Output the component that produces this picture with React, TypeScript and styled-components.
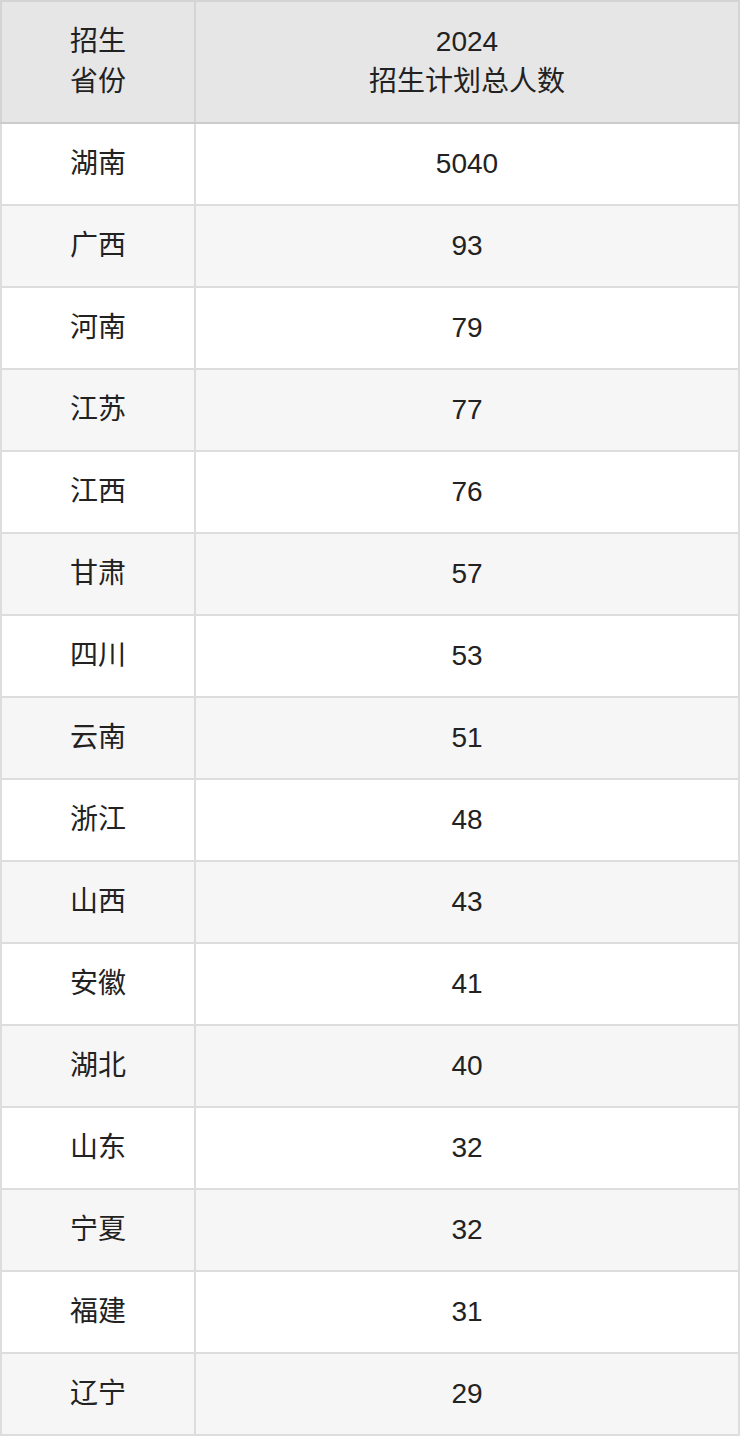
import React from "react";
import styled, { createGlobalStyle } from "styled-components";

const GlobalStyle = createGlobalStyle`
  html, body {
    margin: 0;
    padding: 0;
    background: #ffffff;
  }
  body {
    font-family: "Liberation Sans", "Noto Sans CJK SC", sans-serif;
    color: #222222;
  }
`;

const Table = styled.table`
  width: 740px;
  border-collapse: collapse;
  table-layout: fixed;
  font-family: "Liberation Sans", "Noto Sans CJK SC", sans-serif;
  font-size: 28px;
  line-height: 40px;
  color: #222222;
  border: 2px solid #d4d4d4;
`;

const HeadCell = styled.th<{ $wide?: boolean }>`
  width: ${(p) => (p.$wide ? "auto" : "192px")};
  height: 120px;
  padding: 0;
  background: #e6e6e6;
  font-weight: normal;
  text-align: center;
  vertical-align: middle;
  border: 2px solid #d4d4d4;
  border-bottom-color: #cccccc;
`;

const Row = styled.tr<{ $striped: boolean }>`
  background: ${(p) => (p.$striped ? "#f6f6f6" : "#ffffff")};
`;

const Cell = styled.td`
  height: 80px;
  padding: 0;
  text-align: center;
  vertical-align: middle;
  border: 2px solid #dddddd;
`;

const rows: [string, number][] = [
  ["湖南", 5040],
  ["广西", 93],
  ["河南", 79],
  ["江苏", 77],
  ["江西", 76],
  ["甘肃", 57],
  ["四川", 53],
  ["云南", 51],
  ["浙江", 48],
  ["山西", 43],
  ["安徽", 41],
  ["湖北", 40],
  ["山东", 32],
  ["宁夏", 32],
  ["福建", 31],
  ["辽宁", 29],
];

export default function App() {
  return (
    <>
      <GlobalStyle />
      <Table>
        <thead>
          <tr>
            <HeadCell>
              招生
              <br />
              省份
            </HeadCell>
            <HeadCell $wide>
              2024
              <br />
              招生计划总人数
            </HeadCell>
          </tr>
        </thead>
        <tbody>
          {rows.map(([prov, n], i) => (
            <Row key={prov + i} $striped={i % 2 === 1}>
              <Cell>{prov}</Cell>
              <Cell>{n}</Cell>
            </Row>
          ))}
        </tbody>
      </Table>
    </>
  );
}
